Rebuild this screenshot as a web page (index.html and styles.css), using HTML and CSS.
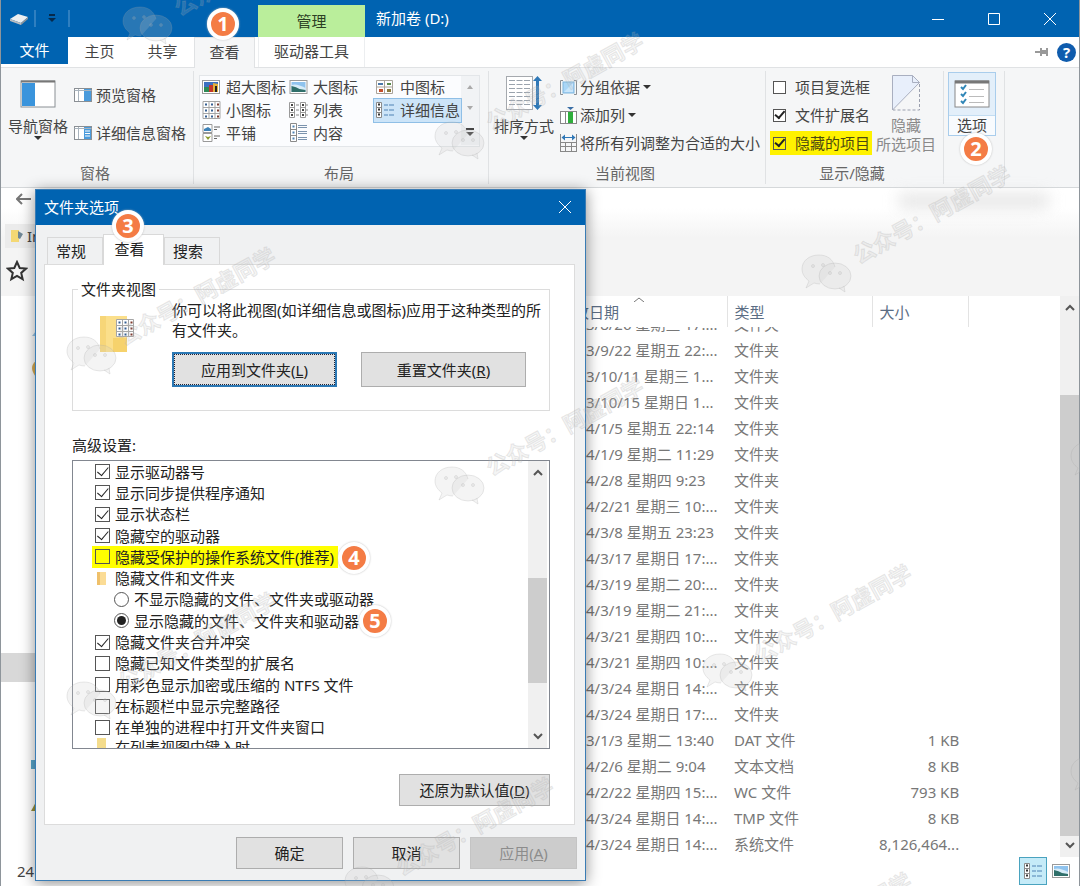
FILE: index.html
```html
<!DOCTYPE html>
<html lang="zh-CN">
<head>
<meta charset="utf-8">
<title>新加卷 (D:)</title>
<link rel="stylesheet" href="styles.css">
</head>
<body>
<svg class="defs" aria-hidden="true">
  <symbol id="i-photo" viewBox="0 0 18 14"><rect x=".5" y=".5" width="17" height="13" fill="#fff" stroke="#9a9a9a"/><rect x="2" y="2" width="14" height="10" fill="#8fc3ee"/><path d="M2 5q5-2 14 3v4H2z" fill="#d7ecf8"/><path d="M2 6q5 1 8 3l6 1v2H2z" fill="#2f6f6a"/></symbol>
  <symbol id="i-details" viewBox="0 0 19 16"><path d="M.5.5h5v15h-5zM.5 5.5h5M.5 10.500h5" fill="#fff" stroke="#8a8a8a"/><path d="M2 2.500h2M2 7.500h2M2 12.500h2" stroke="#333" stroke-width="2"/><path d="M8 3h4M13 3h5M8 8h4M13 8h5M8 13h4M13 13h5" stroke="#4f82b4"/></symbol>
  <symbol id="i-grid" viewBox="0 0 18 18"><path d="M.5.5h17v17H.5zM6.500.5v17M12.500.5v17M.5 6.500h17M.5 12.500h17" fill="#fff" stroke="#a5a5a5"/><path d="M2.500 3.500h2M8.500 3.500h2M2.500 9.500h2M8.500 9.500h2M2.500 15.500h2M8.500 15.500h2" stroke="#355f92" stroke-width="2"/><path d="M14.500 3.500h2M14.500 9.500h2M14.500 15.500h2" stroke="#7e3a2c" stroke-width="2"/></symbol>
  <symbol id="i-wechat" viewBox="-26 -20 52 42"><path d="M8-6C6-14 0-18-8-18-18-18-25-12-25-4c0 5 3 9 7 12l-3 7 8-5q3 1 6 1" /><ellipse cx="8" cy="3" rx="16" ry="13"/><path d="M12 15l6 4-1-6"/><circle cx="-14" cy="-7" r="1.500"/><circle cx="-4" cy="-8" r="1.500"/><circle cx="3" cy="0" r="1.500"/><circle cx="13" cy="0" r="1.500"/></symbol>
  <g id="mark"><use href="#i-wechat" x="-26" y="-20" width="52" height="42"/><text x="32" y="8" transform="rotate(-29)">公众号：阿虚同学</text></g>
</svg>

<main class="window">
  <header class="top">
    <div class="quick">
      <svg width="18" height="12" viewBox="0 0 18 12"><path d="M0 6l8-5 10 3-7 6z" fill="#eceff1"/><path d="M0 6l11 4v2L0 8z" fill="#b8bcc0"/><path d="M11 10l7-6v2l-7 6z" fill="#8f959a"/></svg>
      <i class="tick"></i>
      <button class="plain" aria-label="自定义快速访问工具栏"><svg width="8" height="9"><path d="M1 1h6" stroke="#062a4c" stroke-width="2"/><path d="M0 4h8L4 8z" fill="#062a4c"/></svg></button>
      <i class="tick"></i>
    </div>
    <div class="context">管理</div>
    <h1 class="title">新加卷 (D:)</h1>
    <div class="controls">
      <button class="plain" aria-label="最小化"><svg width="12" height="12"><path d="M0 6.500h12" stroke="#fff"/></svg></button>
      <button class="plain" aria-label="最大化"><svg width="12" height="12"><path d="M.5.5h11v11H.5z" stroke="#fff" fill="none"/></svg></button>
      <button class="plain" aria-label="关闭"><svg width="12" height="12"><path d="M0 0l12 12M12 0L0 12" stroke="#fff"/></svg></button>
    </div>
    <button class="tab file">文件</button>
    <button class="tab">主页</button>
    <button class="tab">共享</button>
    <button class="tab active">查看<span class="badge b1">1</span></button>
    <button class="tab ctx">驱动器工具</button>
    <div class="help">
      <button class="plain" aria-label="固定功能区"><svg width="14" height="10" viewBox="0 0 14 10"><path d="M0 5h5" stroke="#999" stroke-width="2"/><path d="M5 1v8h2V7h4v2h2V1h-2v2H7V1z" fill="#999"/></svg></button>
      <button class="plain q" aria-label="帮助">?</button>
    </div>
  </header>

  <section class="ribbon">
    <div class="group g-pane">
      <div class="tools">
        <button class="big"><svg width="36" height="28"><rect x="1" y="1" width="34" height="26" fill="#fff" stroke="#8a8f94"/><path d="M1 1.500h34" stroke="#777" stroke-width="2"/><rect x="2" y="3" width="13" height="23" fill="#3a94dc"/></svg><span>导航窗格</span><i class="caret"></i></button>
        <div class="stack wide">
          <button class="small"><svg width="18" height="14"><rect x=".5" y=".5" width="17" height="13" fill="#fff" stroke="#8a8f94"/><rect x="10" y="1" width="7" height="12" fill="#4a9bdc"/><path d="M4.500 1v12M.5 2.500h17" stroke="#a9b4be"/></svg>预览窗格</button>
          <button class="small"><svg width="18" height="14"><rect x=".5" y=".5" width="17" height="13" fill="#fff" stroke="#8a8f94"/><rect x="10" y="1" width="7" height="12" fill="#4a9bdc"/><path d="M11 5h5M11 7.500h5M11 10h5" stroke="#fff"/><path d="M4.500 1v12M.5 2.500h17" stroke="#a9b4be"/></svg>详细信息窗格</button>
        </div>
      </div>
      <div class="caption">窗格</div>
    </div>

    <div class="group g-layout">
      <div class="tools">
        <div class="gallery">
          <button class="item"><svg width="18" height="14"><rect x=".5" y=".5" width="17" height="13" fill="#fff" stroke="#9a9a9a"/><rect x="2" y="2" width="14" height="10" fill="#3c6fc0"/><rect x="2" y="7" width="6" height="5" fill="#2d8a55"/><rect x="7" y="5" width="4" height="7" fill="#c4372c"/><path d="M11 3l5 1v8h-5z" fill="#e2b13c"/><path d="M13 6h2v6h-2z" fill="#222"/></svg>超大图标</button>
          <button class="item"><svg width="18" height="14"><use href="#i-photo"/></svg>大图标</button>
          <button class="item"><svg width="18" height="14"><path d="M.5.5h16v13H.5zM8.500 0v14M0 7h17" fill="#fff" stroke="#a9a39a"/><path d="M2 4h5" stroke="#4b78a8" stroke-width="2"/><path d="M11 4h4" stroke="#5a8a4b" stroke-width="2"/><path d="M3 10.500h4" stroke="#c4502c" stroke-width="3"/><path d="M11 10.500h4" stroke="#8b7a3c" stroke-width="3"/></svg>中图标</button>
          <button class="item"><svg width="18" height="18"><use href="#i-grid"/></svg>小图标</button>
          <button class="item"><svg width="19" height="16"><path d="M.5.5h5v15h-5zM.5 5.500h5M.5 10.500h5M11.500.5h5v15h-5zM11.500 5.500h5M11.500 10.500h5" fill="#fff" stroke="#9a9a9a"/><path d="M2 3h2M2 8h2M2 13h2M13 3h2M13 8h2M13 13h2" stroke="#444" stroke-width="2"/><path d="M7 3h3M7 8h3M7 13h3M17 3h2M17 8h2M17 13h2" stroke="#888"/></svg>列表</button>
          <button class="item selected"><svg width="19" height="16"><use href="#i-details"/></svg>详细信息</button>
          <button class="item"><svg width="18" height="18"><path d="M1 .5h9v8H1zM1 9.500h9v8H1z" fill="#fff" stroke="#999"/><path d="M2 5l4-2 3 2v2H2z" fill="#3c82b8"/><path d="M3 12l3 1 3-1-3 4z" fill="#8a9a2c"/><path d="M12 3h6M12 5.500h3M12 12h6M12 14.500h3" stroke="#666"/></svg>平铺</button>
          <button class="item"><svg width="18" height="19"><path d="M1.500.5h6v18h-6zM1.500 6.500h6M1.500 12.500h6" fill="#fff" stroke="#8a8a8a"/><path d="M3.500 3.500h2M3.500 9.500h2M3.500 15.500h2" stroke="#4f82b4" stroke-width="2"/><path d="M9 2.500h9M9 4.500h9M9 8.500h9M9 10.500h9M9 14.500h9M9 16.500h9" stroke="#7b93ad"/></svg>内容</button>
          <div class="spin">
            <svg width="6" height="5"><path d="M0 5h6L3 1z" fill="#aaa"/></svg>
            <svg width="6" height="5"><path d="M0 0h6L3 4z" fill="#aaa"/></svg>
            <svg width="8" height="9"><path d="M0 1h8" stroke="#444" stroke-width="2"/><path d="M0 4h8L4 8z" fill="#444"/></svg>
          </div>
        </div>
      </div>
      <div class="caption">布局</div>
    </div>

    <div class="group g-view">
      <div class="tools">
        <button class="big"><svg width="36" height="36"><rect x=".5" y="1.500" width="26" height="33" fill="#fff" stroke="#a5a9ae"/><path d="M3 5.500h21M3 9.500h21M3 13.500h21M3 17.500h21M3 21.500h21M3 25.500h21M3 29.500h21" stroke="#9aa3ad" stroke-dasharray="6 1.500"/><path d="M31.500 4v28" stroke="#2f78b7" stroke-width="3"/><path d="M27 6l4.500-5L36 6zM27 30l4.500 5L36 30z" fill="#2f78b7"/></svg><span>排序方式</span><i class="caret"></i></button>
        <div class="stack">
          <button class="small tight"><svg width="17" height="15"><rect x="3" y="2" width="11" height="11" fill="#a9d6f7" stroke="#7fb5de"/><path d="M3 .5H.5v14H3M14 .5h2.500v14H14" fill="none" stroke="#8a8f94"/><path d="M4 12l9-9v9z" fill="#c9e6fb"/></svg>分组依据<i class="caret"></i></button>
          <button class="small tight"><svg width="17" height="17"><rect x=".5" y="4.500" width="16" height="12" fill="#fff" stroke="#888"/><path d="M5.500 4v12" stroke="#888"/><rect x="8" y="5" width="5" height="11" fill="#2fae3c"/><path d="M7 0h7l-3.500 3z" fill="#3a6ea5"/></svg>添加列<i class="caret"></i></button>
          <button class="small tight"><svg width="17" height="18"><path d="M.5 0v18M16.500 0v18M0 8.500h17M0 12.500h17M0 17.500h17M5.500 9v9M11.500 9v9" stroke="#888"/><path d="M2 3.500h13" stroke="#2f78b7"/><path d="M5 .5v6L1.500 3.500zM12 .5v6l3.500-3z" fill="#2f78b7"/></svg>将所有列调整为合适的大小</button>
        </div>
      </div>
      <div class="caption">当前视图</div>
    </div>

    <div class="group g-show">
      <div class="tools">
        <div class="stack">
          <label class="check"><input type="checkbox">项目复选框</label>
          <label class="check"><input type="checkbox" checked>文件扩展名</label>
          <label class="check mark"><input type="checkbox" checked>隐藏的项目</label>
        </div>
        <button class="big off"><svg width="28" height="36"><path d="M.5 35V.5h20l7 7L.5 35z" fill="#e8effb"/><path d="M27.500 7.500L20.500.5H.5V35z" fill="none" stroke="#a9afc0"/><path d="M20.500.5v7h7" fill="none" stroke="#a9afc0"/><path d="M27.500 9v26H1" fill="none" stroke="#9a9fae" stroke-dasharray="3 2"/></svg><span>隐藏</span><span>所选项目</span></button>
      </div>
      <div class="caption">显示/隐藏</div>
    </div>

    <div class="group g-opt">
      <button class="options"><span class="pic"><svg width="36" height="28"><rect x="1" y="1" width="34" height="26" fill="#fff" stroke="#888"/><path d="M1 2h34" stroke="#777" stroke-width="3"/><path d="M7 7l2 2 3-4M7 14l2 2 3-4M7 21l2 2 3-4" fill="none" stroke="#2f86b7" stroke-width="2"/><path d="M15 9.500h15M15 16.500h15M15 22.500h15" stroke="#bbb"/></svg></span><span>选项</span></button>
      <span class="badge b2">2</span>
    </div>
  </section>

  <section class="address">
    <button class="plain back" aria-label="后退"><svg width="15" height="12"><path d="M15 6H1M6 1L1 6l5 5" fill="none" stroke="#777" stroke-width="2"/></svg></button>
    <div class="bookmark"><svg width="14" height="14"><path d="M1 1h8v12H1z" fill="#f4d874"/><path d="M8 2l5 3-3 5-2-1z" fill="#6f8796"/></svg>Im</div>
    <div class="star"><svg width="22" height="22" viewBox="0 0 22 22"><path d="M11 2l2.700 6 6.300.600-4.800 4.300 1.500 6.300L11 16l-5.700 3.200 1.500-6.300L2 8.600 8.300 8z" fill="none" stroke="#333" stroke-width="2"/></svg></div>
    <div class="smudge"></div>
  </section>

  <section class="content">
    <nav class="nav">
      <svg width="6" height="100"><path d="M6 35l-4 5h4z" fill="#9cc7e6"/><path d="M6 65q-8 6 0 16z" fill="#dcae54"/></svg>
      <div class="band"></div>
      <svg width="6" height="60"><path d="M1 0h5v9H1z" fill="#5aa9cf"/><path d="M6 42l-5 9h5z" fill="#9a9138"/></svg>
    </nav>
    <table class="files">
      <colgroup><col class="c-name"><col class="c-date"><col class="c-type"><col class="c-size"><col></colgroup>
      <thead><tr><th></th><th class="sorted">改日期<svg width="10" height="5"><path d="M0 5l5-4 5 4" fill="none" stroke="#777"/></svg></th><th>类型</th><th>大小</th><th></th></tr></thead>
      <tbody>
        <tr class="cut"><td></td><td><div>3/8/26 星期三 17:...</div></td><td><div>文件夹</div></td><td></td><td></td></tr>
        <tr><td></td><td>3/9/22 星期五 22:...</td><td>文件夹</td><td></td><td></td></tr>
        <tr><td></td><td>3/10/11 星期三 1...</td><td>文件夹</td><td></td><td></td></tr>
        <tr><td></td><td>3/10/15 星期日 1...</td><td>文件夹</td><td></td><td></td></tr>
        <tr><td></td><td>4/1/5 星期五 22:14</td><td>文件夹</td><td></td><td></td></tr>
        <tr><td></td><td>4/1/9 星期二 11:29</td><td>文件夹</td><td></td><td></td></tr>
        <tr><td></td><td>4/2/8 星期四 9:23</td><td>文件夹</td><td></td><td></td></tr>
        <tr><td></td><td>4/2/21 星期三 10:...</td><td>文件夹</td><td></td><td></td></tr>
        <tr><td></td><td>4/3/8 星期五 23:23</td><td>文件夹</td><td></td><td></td></tr>
        <tr><td></td><td>4/3/17 星期日 17:...</td><td>文件夹</td><td></td><td></td></tr>
        <tr><td></td><td>4/3/19 星期二 20:...</td><td>文件夹</td><td></td><td></td></tr>
        <tr><td></td><td>4/3/19 星期二 21:...</td><td>文件夹</td><td></td><td></td></tr>
        <tr><td></td><td>4/3/21 星期四 10:...</td><td>文件夹</td><td></td><td></td></tr>
        <tr><td></td><td>4/3/21 星期四 10:...</td><td>文件夹</td><td></td><td></td></tr>
        <tr><td></td><td>4/3/24 星期日 14:...</td><td>文件夹</td><td></td><td></td></tr>
        <tr><td></td><td>4/3/24 星期日 17:...</td><td>文件夹</td><td></td><td></td></tr>
        <tr><td></td><td>3/1/3 星期二 13:40</td><td>DAT 文件</td><td>1 KB</td><td></td></tr>
        <tr><td></td><td>4/2/6 星期二 9:04</td><td>文本文档</td><td>8 KB</td><td></td></tr>
        <tr><td></td><td>4/2/22 星期四 15:...</td><td>WC 文件</td><td>793 KB</td><td></td></tr>
        <tr><td></td><td>4/3/24 星期日 14:...</td><td>TMP 文件</td><td>8 KB</td><td></td></tr>
        <tr><td></td><td>4/3/24 星期日 14:...</td><td>系统文件</td><td>8,126,464...</td><td></td></tr>
      </tbody>
    </table>
    <div class="scroll main">
      <svg width="10" height="7"><path d="M1 6l4-4 4 4" fill="none" stroke="#555" stroke-width="2"/></svg>
      <div class="track"><i></i></div>
      <svg width="10" height="7"><path d="M1 1l4 4 4-4" fill="none" stroke="#555" stroke-width="2"/></svg>
    </div>
  </section>

  <footer class="status">
    <span>24</span>
    <div class="views">
      <button class="plain on" aria-label="详细信息视图"><svg width="19" height="16"><use href="#i-details"/></svg></button>
      <button class="plain" aria-label="大图标视图"><svg width="18" height="14"><use href="#i-photo"/></svg></button>
    </div>
  </footer>
</main>

<section class="dialog" role="dialog" aria-labelledby="dlg-title">
  <header class="dlg-head">
    <h2 id="dlg-title">文件夹选项</h2>
    <button class="plain" aria-label="关闭对话框"><svg width="12" height="12"><path d="M0 0l12 12M12 0L0 12" stroke="#fff"/></svg></button>
  </header>
  <div class="dlg-tabs">
    <button>常规</button><button class="cur">查看<span class="badge b3">3</span></button><button>搜索</button>
  </div>
  <div class="panel">
    <fieldset>
      <legend>文件夹视图</legend>
      <svg class="folder" width="34" height="36"><path d="M0 0h27v36H0z" fill="#fbdf8b"/><path d="M0 0h6v36H0z" fill="#f7d678"/><path d="M13 22h14v14H13z" fill="#f6d26c"/><svg x="16" y="3" width="18" height="18"><use href="#i-grid"/></svg></svg>
      <div>
        <p>你可以将此视图(如详细信息或图标)应用于这种类型的所有文件夹。</p>
        <div class="pair"><button class="btn focus">应用到文件夹(<u>L</u>)</button><button class="btn">重置文件夹(<u>R</u>)</button></div>
      </div>
    </fieldset>
    <div class="adv">高级设置:</div>
    <div class="list">
      <div class="rows">
        <label><input type="checkbox" checked>显示驱动器号</label>
        <label><input type="checkbox" checked>显示同步提供程序通知</label>
        <label><input type="checkbox" checked>显示状态栏</label>
        <label><input type="checkbox" checked>隐藏空的驱动器</label>
        <label class="hot"><input type="checkbox">隐藏受保护的操作系统文件(推荐)<span class="badge b4">4</span></label>
        <div class="node"><svg width="10" height="13"><path d="M0 0h9v13H0z" fill="#fbdc95"/><path d="M0 0h3v13H0z" fill="#efc06a"/></svg>隐藏文件和文件夹</div>
        <label class="sub"><input type="radio" name="hidden">不显示隐藏的文件、文件夹或驱动器</label>
        <label class="sub"><input type="radio" name="hidden" checked>显示隐藏的文件、文件夹和驱动器<span class="badge b5">5</span></label>
        <label><input type="checkbox" checked>隐藏文件夹合并冲突</label>
        <label><input type="checkbox">隐藏已知文件类型的扩展名</label>
        <label><input type="checkbox">用彩色显示加密或压缩的 NTFS 文件</label>
        <label><input type="checkbox">在标题栏中显示完整路径</label>
        <label><input type="checkbox">在单独的进程中打开文件夹窗口</label>
        <div class="node last"><svg width="10" height="13"><path d="M0 0h9v13H0z" fill="#f4dc8c"/></svg>在列表视图中键入时</div>
      </div>
      <div class="scroll">
        <svg width="10" height="7"><path d="M1 6l4-4 4 4" fill="none" stroke="#555" stroke-width="2"/></svg>
        <div class="track"><i></i></div>
        <svg width="10" height="7"><path d="M1 1l4 4 4-4" fill="none" stroke="#555" stroke-width="2"/></svg>
      </div>
    </div>
    <button class="btn reset">还原为默认值(<u>D</u>)</button>
  </div>
  <footer class="dlg-foot">
    <button class="btn">确定</button><button class="btn">取消</button><button class="btn" disabled>应用(<u>A</u>)</button>
  </footer>
</section>

<svg class="marks" aria-hidden="true">
  <use href="#mark" x="148" y="25"/><use href="#mark" x="92" y="355"/><use href="#mark" x="460" y="140"/><use href="#mark" x="827" y="273"/><use href="#mark" x="460" y="485"/><use href="#mark" x="92" y="700"/><use href="#mark" x="728" y="672"/><use href="#mark" x="370" y="885"/><use href="#mark" x="728" y="980"/><use href="#mark" x="1096" y="460"/><use href="#mark" x="1096" y="775"/>
</svg>
</body>
</html>
```

FILE: styles.css
```css
* { box-sizing: border-box; }
body { margin: 0; position: relative; overflow: hidden; font: 15px/20px "Noto Sans", "Noto Sans CJK SC", sans-serif; color: #444; background: #fff; }
button { font: inherit; color: inherit; padding: 0; margin: 0; border: 0; background: none; position: relative; white-space: nowrap; }
svg { display: block; flex: none; }
h1, h2, p { margin: 0; font-size: 15px; font-weight: 400; }
.defs { position: absolute; width: 0; height: 0; }
.plain { display: flex; align-items: center; justify-content: center; }
.window { min-height: 100vh; display: flex; flex-direction: column; border: 1px solid #8e959b; border-top: 0; }

.top { display: grid; grid-template-columns: 67px 63px 63px 64px 107px 1fr auto; grid-template-rows: 37px 30px; background: linear-gradient(#0063b1 37px, #fff 37px); border-bottom: 1px solid #e0e2e4; }
.quick { grid-column: span 4; display: flex; align-items: center; gap: 6px; padding-left: 9px; }
.quick .plain { width: 20px; }
.tick { width: 2px; height: 17px; background: #2f7fc0; }
.context { margin-top: 5px; background: #baee9b; text-align: center; line-height: 32px; color: #2c3f24; }
.title { color: #fff; line-height: 37px; padding-left: 11px; }
.controls { display: flex; padding-right: 1px; }
.controls .plain { width: 56px; }
.tab { line-height: 28px; padding-bottom: 2px; }
.file { background: #0063b1; color: #fff; margin-bottom: 3px; padding-bottom: 0; line-height: 27px; }
.active { background: #f5f6f7; border: 1px solid #e0e2e4; border-bottom: 0; margin: 0 3px -1px 0; line-height: 26px; padding-bottom: 3px; }
.ctx { border: 1px solid #eceef0; border-width: 0 1px; }
.help { grid-column: span 2; display: flex; justify-content: flex-end; align-items: center; gap: 8px; padding-right: 3px; }
.q { width: 19px; height: 19px; border-radius: 50%; background: #0f5cad; color: #fff; font-weight: 700; }

.badge { position: absolute; width: 32px; height: 32px; border-radius: 50%; border: 4px solid #fff; background: #f47c45; color: #fff; font: 700 20px/24px "Noto Sans", sans-serif; text-align: center; box-shadow: 0 0 2px #bbb; z-index: 2; }
.b1 { left: 12px; top: -30px; }
.b2 { left: 16px; top: 62px; }
.b3 { left: 8px; top: -25px; }
.b4 { left: 100%; top: -4px; }
.b5 { left: 100%; top: -5px; margin-left: -4px; }

.ribbon { display: flex; background: #f5f6f7; height: 120px; border-bottom: 1px solid #d5d8da; }
.group { display: flex; flex-direction: column; margin: 3px 0; border-right: 1px solid #e0e2e4; padding-left: 5px; position: relative; }
.tools { display: flex; flex: 1; }
.caption { text-align: center; line-height: 22px; color: #666; margin: 0 8px 0 -1px; }
.g-pane { width: 193px; }
.g-layout { width: 295px; }
.g-view { width: 277px; }
.g-show { width: 178px; padding-left: 4px; }
.g-opt { width: 61px; padding-left: 4px; }
.big { display: flex; flex-direction: column; align-items: center; justify-content: flex-start; width: 64px; height: 80px; padding-top: 9px; }
.big svg { margin-bottom: 8px; }
.g-view .big { padding-top: 4px; width: 60px; }
.g-view .big svg, .g-show .big svg { margin-bottom: 5px; }
.g-show .big { padding-top: 4px; color: #8a8a8a; margin-left: 2px; line-height: 19px; }
.caret { border: 4px solid transparent; border-top-color: #333; border-bottom: 0; }
.stack { display: flex; flex-direction: column; padding-top: 2px; }
.small { display: flex; align-items: center; gap: 4px; height: 28px; }
.tight { gap: 3px; }
.g-view .stack { margin-left: 6px; }
.wide { padding: 10px 0 0 4px; gap: 10px; }
.gallery { display: grid; grid-template-columns: 87px 87px 87px 18px; grid-template-rows: repeat(3, 23px); margin-top: 4px; height: 72px; border: 1px solid #e3e6e9; background: #fbfcfe; }
.item { display: flex; align-items: center; gap: 5px; padding: 0 0 2px 2px; }
.item svg { width: 19px; }
.selected { background: #cce4f8; outline: 1px solid #8fbfe6; }
.spin { grid-column: 4; grid-row: 1 / span 3; display: flex; flex-direction: column; align-items: center; justify-content: space-around; background: #f1f3f5; }
.check { display: flex; align-items: center; gap: 9px; height: 24px; margin: 2px 0; padding: 0 2px 0 3px; }
.mark { background: #fff200; color: #4c4a10; }
input { appearance: none; margin: 0; flex: none; width: 13px; height: 13px; border: 1px solid #555; background: #fff; display: grid; place-items: center; }
input[type=checkbox]:checked::before { content: ""; width: 4px; height: 8px; border: solid #222; border-width: 0 2px 2px 0; transform: rotate(40deg) translate(-1px, -1px); }
.mark input, .hot input { background: transparent; }
.options { width: 48px; height: 64px; margin-top: 1px; border: 1px solid #a9cdec; background: #f8fbfe; display: flex; flex-direction: column; align-items: center; line-height: 19px; }
.pic { display: grid; place-items: center; width: 100%; height: 43px; background: #e3effa; border-bottom: 1px solid #c3ddf2; }

.address { height: 108px; background: linear-gradient(#fff 20px, #f4f4f4 50px); position: relative; }
.back { height: 22px; padding-left: 15px; }
.bookmark { display: flex; align-items: center; gap: 3px; height: 24px; margin: 14px 0 0 4px; padding-left: 5px; width: 60px; background: #ebebeb; }
.star { padding: 12px 0 0 5px; }
.smudge { position: absolute; right: 30px; top: 6px; width: 150px; height: 14px; background: #d8d8d8; filter: blur(8px); opacity: .7; }

.content { flex: 1; display: flex; min-height: 560px; }
.nav { width: 35px; display: flex; flex-direction: column; padding-left: 29px; }
.band { margin: 257px 0 78px -29px; height: 29px; background: #d8d8d8; }
.files { flex: 1; table-layout: fixed; border-collapse: collapse; line-height: 20px; color: #777; align-self: flex-start; }
.c-name { width: 537px; }
.c-date { width: 154px; }
.c-type { width: 145px; }
.c-size { width: 96px; }
.files th { height: 31px; padding: 0 0 0 7px; text-align: left; font-weight: 400; color: #5b6d84; border-right: 1px solid #e3e3e3; position: relative; }
.files th:first-child, .files th:last-child { border: 0; }
.files .sorted { padding-left: 1px; }
.sorted svg { position: absolute; left: 61px; top: 1px; }
.files td { height: 26px; padding: 0 0 0 7px; white-space: nowrap; }
.files td:nth-child(2) { padding-left: 13px; }
.files td:nth-child(4) { text-align: right; padding-right: 9px; }
.files .cut td { height: 10px; }
.cut div { height: 10px; overflow: hidden; display: flex; align-items: flex-end; padding-bottom: 3px; }
.scroll { width: 19px; background: #f0f0f0; display: flex; flex-direction: column; align-items: center; justify-content: space-between; padding: 8px 0; }
.track { flex: 1; width: 100%; display: grid; grid-template-rows: 84fr 442fr 6fr; margin: 0; }
.track i { grid-row: 2; background: #cdcdcd; }
.status { height: 29px; display: flex; justify-content: space-between; padding-left: 16px; line-height: 29px; color: #444; }
.views { display: flex; padding-right: 4px; }
.views .plain { width: 28px; height: 28px; }
.views .on { background: #c5ebf8; border: 1px solid #4aa3bf; }

.dialog { position: absolute; left: 35px; top: 189px; width: 551px; background: #f0f1f2; border: 1px solid #3a7cb4; box-shadow: 0 2px 14px rgba(0, 0, 0, .45); color: #222; }
.dlg-head { display: flex; justify-content: space-between; align-items: center; height: 35px; background: #0063b1; color: #fff; padding: 0 14px 2px 8px; }
.dlg-tabs { display: flex; align-items: flex-end; height: 39px; padding-left: 11px; }
.dlg-tabs button { width: 56px; height: 27px; border: 1px solid #d9d9d9; border-bottom: 0; padding-right: 8px; }
.dlg-tabs .cur { width: 61px; height: 31px; background: #fff; margin-bottom: -1px; z-index: 1; border-color: #d9d9d9; padding: 0 8px 3px 0; }
.panel { margin: 0 10px 0 8px; height: 561px; background: #fff; border: 1px solid #dcdcdc; padding: 14px 24px 0 27px; display: flex; flex-direction: column; }
fieldset { margin: 0; border: 1px solid #dcdcdc; min-width: 0; height: 132px; display: flex; padding: 0 0 0 27px; }
legend { margin-left: -22px; padding: 0 3px; }
.folder { margin: 17px 38px 0 0; }
fieldset p { width: 374px; margin: 1px 0 0 0; }
.pair { display: flex; gap: 24px; margin-top: 12px; }
.btn { background: #e1e1e1; border: 1px solid #adadad; text-align: center; }
.pair .btn { width: 165px; height: 35px; }
.btn.focus { border: 2px solid #2b78b4; outline: 1px dotted #223; outline-offset: -3px; }
.adv { margin: 24px 0 5px; }
.list { display: flex; height: 289px; border: 1px solid #828790; overflow: hidden; padding-right: 2px; }
.rows { flex: 1; display: grid; grid-template-rows: repeat(13, 1fr) 10px; justify-items: start; padding: 0 0 0 19px; min-width: 0; }
.rows label, .node { display: flex; align-items: center; gap: 5px; position: relative; padding: 0 4px 0 3px; white-space: nowrap; min-height: 0; }
.rows input { width: 15px; height: 15px; }
.rows input[type=checkbox]:checked::before { border-width: 0 1px 1px 0; width: 5px; height: 10px; }
.rows .sub { padding-left: 22px; gap: 5px; }
input[type=radio] { border-radius: 50%; }
input[type=radio]:checked::before { content: ""; width: 9px; height: 9px; border-radius: 50%; background: #222; }
.rows .node { gap: 8px; padding-left: 5px; }
.rows .last { height: 10px; overflow: hidden; align-items: flex-start; line-height: 19px; }
.rows .hot { background: #ff0; }
.list .scroll { padding: 8px 0; }
.list .track { grid-template-rows: 97fr 104fr 46fr; margin: 4px 0; }
.reset { width: 151px; height: 32px; margin-top: 25px; align-self: flex-end; }
.dlg-foot { display: flex; justify-content: flex-end; gap: 10px; padding: 12px 8px 11px; }
.dlg-foot .btn { width: 107px; height: 32px; }
.btn:disabled { background: #ccc; border-color: #c4c4c4; color: #8c8c8c; }

.marks { position: absolute; left: 0; top: 0; width: 100%; height: 100%; pointer-events: none; z-index: 5; fill: rgba(200, 200, 200, .2); stroke: rgba(160, 160, 160, .22); stroke-width: 1px; font: 700 22px "Noto Sans CJK SC", sans-serif; }
```
